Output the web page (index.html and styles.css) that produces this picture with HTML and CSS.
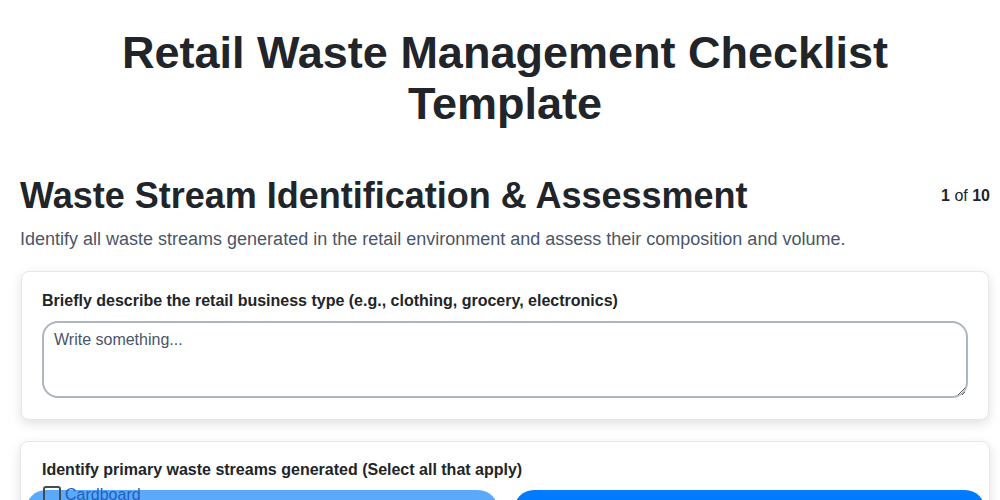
FILE: index.html
```html
<!DOCTYPE html>
<html lang="en">
<head>
<meta charset="utf-8">
<title>Retail Waste Management Checklist Template</title>
<link rel="stylesheet" href="styles.css">
</head>
<body>
<main class="page">
  <h1 class="title">Retail Waste Management Checklist Template</h1>
  <section class="step">
    <div class="step-head">
      <h2 class="step-title">Waste Stream Identification &amp; Assessment</h2>
      <div class="step-count"><b>1</b> of <b>10</b></div>
    </div>
    <p class="step-desc">Identify all waste streams generated in the retail environment and assess their composition and volume.</p>

    <div class="card">
      <label class="q-label" for="biz">Briefly describe the retail business type (e.g., clothing, grocery, electronics)</label>
      <textarea id="biz" class="q-text" placeholder="Write something..."></textarea>
    </div>

    <div class="card card-2">
      <div class="q-label">Identify primary waste streams generated (Select all that apply)</div>
      <div class="options">
        <label class="option option-light"><span class="opt-inner"><input type="checkbox" class="chk"> Cardboard</span></label>
        <label class="option option-blue"><span class="opt-inner"><input type="checkbox" class="chk"> Plastic packaging</span></label>
      </div>
    </div>
  </section>
</main>
</body>
</html>
```
FILE: styles.css
```css
* { box-sizing: border-box; }
html, body { margin: 0; padding: 0; background: #ffffff; }
body {
  font-family: "Liberation Sans", Arial, sans-serif;
  color: #212529;
}
.page { padding: 27px 10px 0 20px; }
.title {
  margin: 0 0 45px 0;
  text-align: center;
  font-size: 45px;
  line-height: 51px;
  font-weight: 700;
  color: #212529;
}
.step-head {
  display: flex;
  justify-content: space-between;
  align-items: center;
}
.step-title {
  margin: 0;
  font-size: 36px;
  line-height: 43px;
  font-weight: 700;
  color: #212529;
}
.step-count { font-size: 16px; color: #212529; }
.step-desc {
  margin: 9px 0 19px 0;
  font-size: 18px;
  line-height: 26px;
  color: #4a5568;
}
.card {
  background: #fff;
  border: 1px solid #e5e7eb;
  border-radius: 8px;
  box-shadow: 0 4px 12px rgba(0,0,0,0.12);
  padding: 19px 20px 21px 20px;
  margin: 0 0 21px 1px;
  width: 968px;
}
.q-label {
  display: block;
  font-size: 16px;
  line-height: 20px;
  font-weight: 700;
  color: #212529;
  margin-bottom: 10px;
}
.q-text {
  display: block;
  width: 926px;
  height: 77px;
  border: 2px solid #adb5bd;
  border-radius: 16px;
  padding: 8px 10px;
  font-family: "Liberation Sans", Arial, sans-serif;
  font-size: 16px;
  color: #212529;
  resize: vertical;
}
.q-text::placeholder { color: #4a5568; }
.card-2 { margin-left: 0; width: 970px; padding-top: 18px; padding-left: 21px; }
.options {
  display: grid;
  grid-template-columns: 1fr 1fr;
  gap: 16px;
  margin: 10px -16px 0 -16px;
}
.option {
  display: block;
  height: 48px;
  border-radius: 20px;
  position: relative;
  font-size: 16px;
  color: #1f5fbf;
}
.option-light { background: #5aa9fb; }
.option-blue { background: #007bff; color: #fff; }
.opt-inner {
  position: absolute;
  left: 17px;
  top: -4px;
  display: flex;
  align-items: center;
  gap: 4px;
}
.chk {
  margin: 0;
  width: 18px;
  height: 18px;
  appearance: none;
  border: 2px solid #444b55;
  border-radius: 3px;
  background: transparent;
}
.option-blue .opt-inner { visibility: hidden; }
```
